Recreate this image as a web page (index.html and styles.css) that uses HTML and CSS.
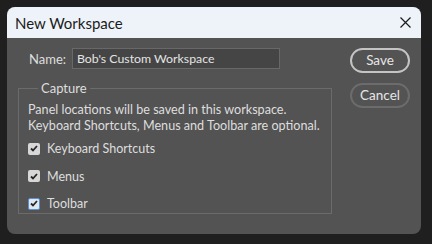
FILE: index.html
```html
<!DOCTYPE html>
<html lang="en">
<head>
	<meta charset="UTF-8">
	<title>New Workspace</title>
	<link rel="stylesheet" href="styles.css">
</head>
<body>
	<div class="dialog">
		<div class="titlebar">
			<span class="title">New Workspace</span>
			<span class="close">
				<svg width="11" height="11" viewBox="0 0 11 11"><path d="M0.5 0.5L10.5 10.5M10.5 0.5L0.5 10.5" stroke="#1b1b1b" stroke-width="1.2" fill="none"/></svg>
			</span>
		</div>
		<div class="content">
			<div class="main">
				<div class="namerow">
					<label class="namelabel">Name:</label>
					<div class="input">Bob's Custom Workspace</div>
				</div>
				<fieldset class="capture">
					<legend>Capture</legend>
					<p class="note">Panel locations will be saved in this workspace.<br>Keyboard Shortcuts, Menus and Toolbar are optional.</p>
					<div class="check"><span class="box"><svg width="8" height="7" viewBox="0 0 8 7"><path d="M1 3.5L3 5.5L7 1" stroke="#262626" stroke-width="1.8" fill="none"/></svg></span>Keyboard Shortcuts</div>
					<div class="check"><span class="box"><svg width="8" height="7" viewBox="0 0 8 7"><path d="M1 3.5L3 5.5L7 1" stroke="#262626" stroke-width="1.8" fill="none"/></svg></span>Menus</div>
					<div class="check"><span class="box focus"><svg width="8" height="7" viewBox="0 0 8 7"><path d="M1 3.5L3 5.5L7 1" stroke="#262626" stroke-width="1.8" fill="none"/></svg></span>Toolbar</div>
				</fieldset>
			</div>
			<div class="buttons">
				<div class="btn primary">Save</div>
				<div class="btn">Cancel</div>
			</div>
		</div>
	</div>
</body>
</html>
```
FILE: styles.css
```css
body,p,fieldset,legend{padding: 0;margin: 0;}
body{background-color: #1f1f1f;font-family: Lato,"Noto Sans",sans-serif;color: #dedede;}
.dialog{width: 414px;height: 227px;margin: 7px 0 0 7px;background-color: #535353;border-radius: 8px;overflow: hidden;}
.titlebar{height: 31px;background-color: #eef3f9;display: flex;align-items: center;justify-content: space-between;padding: 0 10px 0 8px;}
.title{font-size: 15px;color: #1b1b1b;}
.close{display: flex;}
.content{display: flex;padding: 10px 0 0 11px;}
.main{width: 314px;}
.namerow{display: flex;align-items: center;height: 21px;padding-left: 11px;}
.namelabel{font-size: 13px;width: 43px;}
.input{width: 202px;height: 19px;line-height: 19px;padding-left: 4px;background-color: #454545;border: 1px solid #686868;font-size: 12.3px;color: #e4e4e4;}
.capture{margin-top: 11px;border: 1px solid #6b6b6b;height: 134px;padding: 0 0 4px 9px;box-sizing: border-box;}
.capture legend{margin-left: 10px;padding: 0 3px;font-size: 13px;line-height: 16px;}
.note{font-size: 12.6px;line-height: 16px;margin-top: 6px;}
.check{display: flex;align-items: center;height: 27.5px;font-size: 12.5px;}
.check:first-of-type{margin-top: 1px;}
.box{width: 12px;height: 12px;box-sizing: border-box;background-color: #d7d7d7;border-radius: 2px;display: flex;align-items: center;justify-content: center;margin-right: 7px;}
.box.focus{border: 1px solid #5b8fd6;background-color: #dfe6f0;}
.buttons{margin-left: 18px;display: flex;flex-direction: column;gap: 10px;}
.btn{width: 60px;height: 25px;box-sizing: border-box;border: 2px solid #6c6c6c;border-radius: 13px;text-align: center;line-height: 21px;font-size: 13.5px;color: #e6e6e6;}
.btn.primary{border-color: #c4c4c4;}
```
